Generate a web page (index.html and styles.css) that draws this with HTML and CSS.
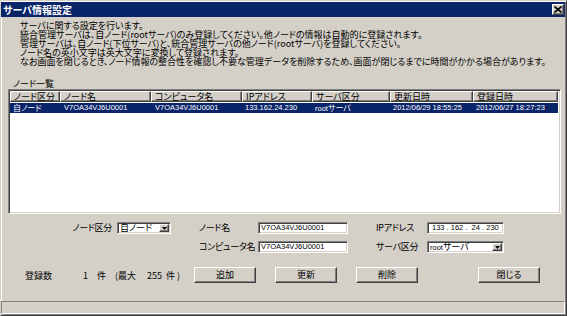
FILE: index.html
```html
<!DOCTYPE html>
<html>
<head>
    <meta charset="utf-8" />
    <title>サーバ情報設定</title>
    <link rel="stylesheet" href="styles.css">
</head>
<body>
    <div id="window">
        <div id="titlebar">
            <span id="title">サーバ情報設定</span>
            <span id="close">
                <svg width="8" height="7" viewBox="0 0 8 7"><path d="M0.5 0.5L7.5 6.5M7.5 0.5L0.5 6.5" stroke="#000" stroke-width="1.6"/></svg>
            </span>
        </div>
        <div id="desc">
            <p>サーバに関する設定を行います。</p>
            <p>統合管理サーバは、自ノード(rootサーバ)のみ登録してください。他ノードの情報は自動的に登録されます。</p>
            <p>管理サーバは、自ノード(下位サーバ)と、統合管理サーバの他ノード(rootサーバ)を登録してください。</p>
            <p>ノード名の英小文字は英大文字に変換して登録されます。</p>
            <p>なお画面を閉じるとき、ノード情報の整合性を確認し不要な管理データを削除するため、画面が閉じるまでに時間がかかる場合があります。</p>
        </div>
        <div id="list-label">ノード一覧</div>
        <div id="list">
            <div class="row header">
                <div class="cell w1">ノード区分</div>
                <div class="cell w2">ノード名</div>
                <div class="cell w3">コンピュータ名</div>
                <div class="cell w4">IPアドレス</div>
                <div class="cell w5">サーバ区分</div>
                <div class="cell w6">更新日時</div>
                <div class="cell w7">登録日時</div>
            </div>
            <div class="row selected">
                <div class="cell w1">自ノード</div>
                <div class="cell w2 latin">V7OA34VJ6U0001</div>
                <div class="cell w3 latin">V7OA34VJ6U0001</div>
                <div class="cell w4 latin">133.162.24.230</div>
                <div class="cell w5"><span class="latin">root</span>サーバ</div>
                <div class="cell w6 latin">2012/06/29 18:55:25</div>
                <div class="cell w7 latin">2012/06/27 18:27:23</div>
            </div>
        </div>
        <div id="form">
            <div class="label right">ノード区分</div>
            <div class="combo"><span class="combo-text">自ノード</span><span class="drop"><svg width="5" height="3" viewBox="0 0 5 3"><path d="M0 0h5L2.5 3z" fill="#000"/></svg></span></div>
            <div></div>
            <div class="label">ノード名</div>
            <div class="field latin">V7OA34VJ6U0001</div>
            <div></div>
            <div class="label">IPアドレス</div>
            <div class="field latin ip">133 . 162 . &nbsp;24 . 230</div>

            <div></div>
            <div></div>
            <div></div>
            <div class="label">コンピュータ名</div>
            <div class="field latin">V7OA34VJ6U0001</div>
            <div></div>
            <div class="label">サーバ区分</div>
            <div class="combo"><span class="combo-text"><span class="latin">root</span>サーバ</span><span class="drop"><svg width="5" height="3" viewBox="0 0 5 3"><path d="M0 0h5L2.5 3z" fill="#000"/></svg></span></div>
        </div>
        <div id="count-row">
            <span class="count-label">登録数</span>
            <span class="count-now">1　件　(最大</span>
            <span class="count-max">255  件 )</span>
            <button class="btn">追加</button>
            <button class="btn">更新</button>
            <button class="btn">削除</button>
            <button class="btn close-btn">閉じる</button>
        </div>
        <div id="statusbar"></div>
    </div>
</body>
</html>
```

FILE: styles.css
```css
body{
    margin: 0;
    background-color: #d4d0c8;
    font-family: "Noto Sans CJK JP", sans-serif;
    font-size: 9px;
    font-feature-settings: "palt";
    color: #000;
}
#window{
    width: 567px;
    height: 316px;
    box-sizing: border-box;
    border: 1px solid;
    border-color: #d4d0c8 #404040 #404040 #d4d0c8;
    box-shadow: inset 1px 1px #fff, inset -1px -1px #808080;
    padding: 1px 1px 1px 0;
    display: flex;
    flex-direction: column;
}
#titlebar{
    height: 15px;
    background-color: #0a246a;
    color: #fff;
    display: flex;
    align-items: center;
    justify-content: space-between;
    padding: 0 1px 0 2px;
}
#title{
    font-weight: bold;
    font-size: 10px;
    line-height: 15px;
}
#close{
    width: 12px;
    height: 11px;
    box-sizing: border-box;
    background-color: #d4d0c8;
    border: 1px solid;
    border-color: #fff #404040 #404040 #fff;
    box-shadow: inset -1px -1px #808080;
    display: flex;
    align-items: center;
    justify-content: center;
}
#desc{
    margin: 4px 0 0 19px;
    line-height: 9px;
}
#desc p{
    margin: 0;
    white-space: nowrap;
}
#list-label{
    margin: 13px 0 0 12px;
    line-height: 9px;
}
#list{
    margin: 1px 4px 0 7px;
    height: 125px;
    box-sizing: border-box;
    background-color: #fff;
    border: 1px solid;
    border-color: #808080 #fff #fff #808080;
    box-shadow: inset 1px 1px #404040, inset -1px -1px #d4d0c8;
    padding: 1px;
}
.row{
    display: flex;
    width: 548px;
}
.cell{
    box-sizing: border-box;
    padding-left: 3px;
    white-space: nowrap;
}
.header{
    height: 11px;
}
.header .cell{
    background-color: #d4d0c8;
    border: 1px solid;
    border-color: #fff #404040 #404040 #fff;
    box-shadow: inset -1px -1px #808080;
    line-height: 9px;
}
.selected{
    margin-top: 1px;
    height: 10px;
    line-height: 10px;
    background-color: #0a246a;
    color: #fff;
    font-size: 8px;
}
.w1{ width: 50px; }
.w2{ width: 91px; }
.w3{ width: 91px; }
.w4{ width: 70px; }
.w5{ width: 78px; }
.w6{ width: 83px; }
.w7{ width: 85px; }
.latin{
    font-family: "Liberation Sans", "Noto Sans CJK JP", sans-serif;
    font-size: 7.5px;
}
.selected .w2, .selected .w3{
    padding-left: 4px;
}
#form{
    margin-top: 8px;
    display: grid;
    grid-template-columns: 116px 54px 28px 59px 90px 28px 51px 77px;
    grid-template-rows: 12px 12px;
    row-gap: 7px;
}
.label{
    line-height: 12px;
    white-space: nowrap;
    letter-spacing: -0.3px;
}
.right{
    text-align: right;
    padding-right: 5px;
}
.field, .combo{
    box-sizing: border-box;
    height: 12px;
    background-color: #fff;
    border: 1px solid;
    border-color: #808080 #fff #fff #808080;
    box-shadow: inset 1px 1px #404040, inset -1px -1px #d4d0c8;
    line-height: 10px;
    padding-left: 2px;
    white-space: nowrap;
}
.ip{
    padding-left: 4px;
}
.combo{
    display: flex;
    align-items: center;
    padding: 1px;
}
.combo-text{
    flex: 1;
    padding-left: 1px;
    line-height: 10px;
}
.combo-text .latin{
    font-size: 7.5px;
}
.drop{
    width: 10px;
    height: 8px;
    box-sizing: border-box;
    background-color: #d4d0c8;
    border: 1px solid;
    border-color: #fff #404040 #404040 #fff;
    box-shadow: inset -1px -1px #808080;
    display: flex;
    align-items: center;
    justify-content: center;
}
#count-row{
    margin-top: 14px;
    height: 16px;
    display: flex;
    align-items: center;
    white-space: pre;
}
.count-label{
    margin-left: 24px;
    width: 58px;
}
.count-now{
    width: 64px;
}
.count-max{
    width: 47px;
}
.btn{
    width: 62px;
    height: 16px;
    margin: 0 0 0 19px;
    padding: 0;
    box-sizing: border-box;
    background-color: #d4d0c8;
    border: 1px solid;
    border-color: #fff #404040 #404040 #fff;
    box-shadow: inset -1px -1px #808080;
    font-family: "Noto Sans CJK JP", sans-serif;
    font-size: 9px;
    font-feature-settings: "palt";
    line-height: 12px;
    color: #000;
}
.count-max + .btn{
    margin-left: 0;
}
.close-btn{
    margin-left: 60px;
}
#statusbar{
    margin-top: auto;
    height: 13px;
    box-sizing: border-box;
    border: 1px solid;
    border-color: #808080 #fff #fff #808080;
}
```
